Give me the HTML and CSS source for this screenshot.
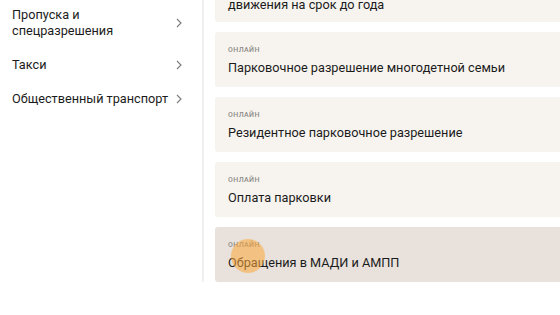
FILE: index.html
```html
<!DOCTYPE html>
<html lang="ru">
<head>
<meta charset="utf-8">
<link rel="stylesheet" href="styles.css">
</head>
<body>
<div class="page">
  <aside class="sidebar">
    <nav class="menu">
      <a class="menu-item"><span class="menu-text">Пропуска и спецразрешения</span><svg class="chev" viewBox="0 0 6 10" width="6" height="10"><path d="M1 1l4 4-4 4" fill="none" stroke="#7a7a7a" stroke-width="1.1"/></svg></a>
      <a class="menu-item"><span class="menu-text">Такси</span><svg class="chev" viewBox="0 0 6 10" width="6" height="10"><path d="M1 1l4 4-4 4" fill="none" stroke="#7a7a7a" stroke-width="1.1"/></svg></a>
      <a class="menu-item"><span class="menu-text">Общественный транспорт</span><svg class="chev" viewBox="0 0 6 10" width="6" height="10"><path d="M1 1l4 4-4 4" fill="none" stroke="#7a7a7a" stroke-width="1.1"/></svg></a>
    </nav>
  </aside>
  <main class="main">
    <div class="card card-first">
      <div class="label">Онлайн</div>
      <div class="title">Разрешение на въезд в зону ограничения движения на срок до года</div>
    </div>
    <div class="card">
      <div class="label">Онлайн</div>
      <div class="title">Парковочное разрешение многодетной семьи</div>
    </div>
    <div class="card">
      <div class="label">Онлайн</div>
      <div class="title">Резидентное парковочное разрешение</div>
    </div>
    <div class="card">
      <div class="label">Онлайн</div>
      <div class="title">Оплата парковки</div>
    </div>
    <div class="card card-hover">
      <div class="label">Онлайн</div>
      <div class="title">Обращения в МАДИ и АМПП</div>
      <span class="tap"></span>
    </div>
  </main>
</div>
</body>
</html>
```

FILE: styles.css
```css
html, body {
  margin: 0;
  padding: 0;
  background: #ffffff;
  overflow: hidden;
}
body {
  font-family: Roboto, "Noto Sans", sans-serif;
  color: #1b1b1b;
  width: 560px;
  height: 315px;
}
.page {
  display: flex;
  align-items: stretch;
  margin-top: -51px;
}
.sidebar {
  flex: none;
  width: 190px;
  padding: 58px 0 0 12px;
  border-right: 2px solid #f0f0f0;
}
.menu {
  display: flex;
  flex-direction: column;
}
.menu-item {
  display: flex;
  align-items: center;
  justify-content: space-between;
  width: 170px;
  padding: 0 0 18px 0;
  font-size: 12.7px;
  line-height: 16px;
  color: #1b1b1b;
}
.menu-text {
  max-width: 158px;
}
.chev {
  flex: none;
  margin-bottom: 1px;
}
.main {
  flex: 1;
  display: flex;
  flex-direction: column;
  gap: 10px;
  padding-left: 11px;
}
.card {
  position: relative;
  background: #f7f4ef;
  border-radius: 3px;
  height: 55px;
  padding: 2px 13px 0;
  display: flex;
  flex-direction: column;
  justify-content: center;
  gap: 4px;
  box-sizing: border-box;
  width: 360px;
  overflow: hidden;
}
.card-first {
  height: 73px;
  padding-top: 6px;
}
.card-first .title {
  width: 300px;
}
.label {
  font-size: 7px;
  line-height: 10px;
  text-transform: uppercase;
  letter-spacing: 0.4px;
  color: #8c8a86;
  font-weight: 500;
}
.title {
  font-size: 12.7px;
  line-height: 17px;
  color: #1b1b1b;
}
.card-hover {
  background: #e9e2dc;
}
.tap {
  position: absolute;
  left: 16px;
  top: 12px;
  width: 34px;
  height: 34px;
  border-radius: 50%;
  background: rgba(252, 168, 58, 0.55);
}
```
